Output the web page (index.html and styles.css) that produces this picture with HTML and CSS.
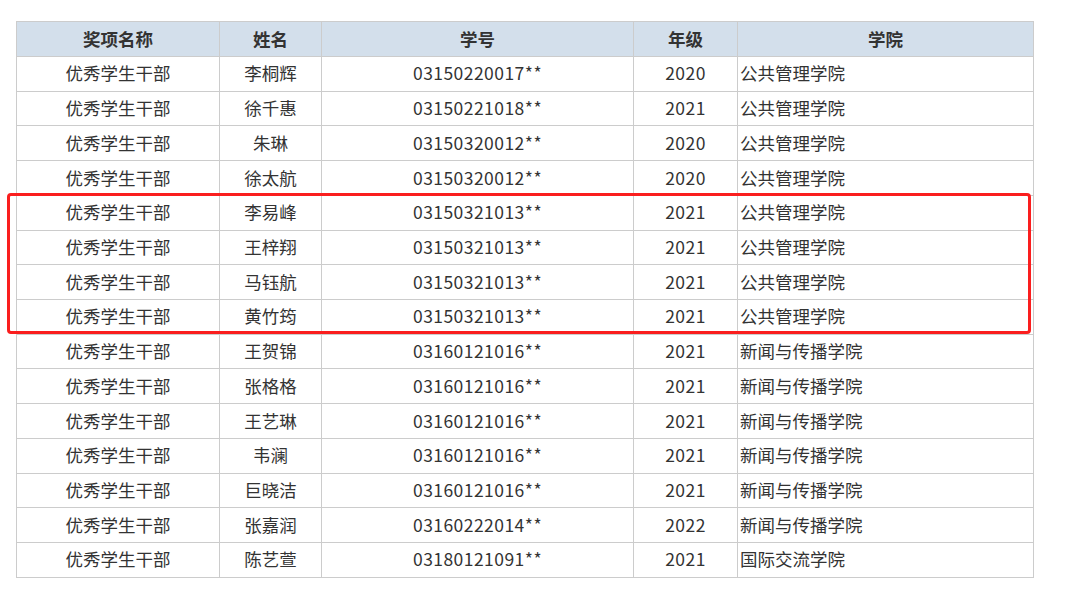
FILE: index.html
```html
<!DOCTYPE html>
<html lang="zh-CN">
<head>
<meta charset="utf-8">
<title>获奖名单</title>
<link rel="stylesheet" href="styles.css">
</head>
<body>
<div class="page">
  <div class="table-wrap">
    <table class="award-table">
      <colgroup>
        <col class="c1"><col class="c2"><col class="c3"><col class="c4"><col class="c5">
      </colgroup>
      <thead>
        <tr><th>奖项名称</th><th>姓名</th><th>学号</th><th>年级</th><th>学院</th></tr>
      </thead>
      <tbody>
        <tr><td>优秀学生干部</td><td>李桐辉</td><td class="num">03150220017**</td><td class="num">2020</td><td class="left">公共管理学院</td></tr>
        <tr><td>优秀学生干部</td><td>徐千惠</td><td class="num">03150221018**</td><td class="num">2021</td><td class="left">公共管理学院</td></tr>
        <tr><td>优秀学生干部</td><td>朱琳</td><td class="num">03150320012**</td><td class="num">2020</td><td class="left">公共管理学院</td></tr>
        <tr><td>优秀学生干部</td><td>徐太航</td><td class="num">03150320012**</td><td class="num">2020</td><td class="left">公共管理学院</td></tr>
        <tr><td>优秀学生干部</td><td>李易峰</td><td class="num">03150321013**</td><td class="num">2021</td><td class="left">公共管理学院</td></tr>
        <tr><td>优秀学生干部</td><td>王梓翔</td><td class="num">03150321013**</td><td class="num">2021</td><td class="left">公共管理学院</td></tr>
        <tr><td>优秀学生干部</td><td>马钰航</td><td class="num">03150321013**</td><td class="num">2021</td><td class="left">公共管理学院</td></tr>
        <tr><td>优秀学生干部</td><td>黄竹筠</td><td class="num">03150321013**</td><td class="num">2021</td><td class="left">公共管理学院</td></tr>
        <tr><td>优秀学生干部</td><td>王贺锦</td><td class="num">03160121016**</td><td class="num">2021</td><td class="left">新闻与传播学院</td></tr>
        <tr><td>优秀学生干部</td><td>张格格</td><td class="num">03160121016**</td><td class="num">2021</td><td class="left">新闻与传播学院</td></tr>
        <tr><td>优秀学生干部</td><td>王艺琳</td><td class="num">03160121016**</td><td class="num">2021</td><td class="left">新闻与传播学院</td></tr>
        <tr><td>优秀学生干部</td><td>韦澜</td><td class="num">03160121016**</td><td class="num">2021</td><td class="left">新闻与传播学院</td></tr>
        <tr><td>优秀学生干部</td><td>巨晓洁</td><td class="num">03160121016**</td><td class="num">2021</td><td class="left">新闻与传播学院</td></tr>
        <tr><td>优秀学生干部</td><td>张嘉润</td><td class="num">03160222014**</td><td class="num">2022</td><td class="left">新闻与传播学院</td></tr>
        <tr><td>优秀学生干部</td><td>陈艺萱</td><td class="num">03180121091**</td><td class="num">2021</td><td class="left">国际交流学院</td></tr>
      </tbody>
    </table>
    <div class="highlight"></div>
  </div>
</div>
</body>
</html>
```

FILE: styles.css
```css
html, body {
  margin: 0;
  padding: 0;
  background: #ffffff;
}

.page {
  padding: 21px 0 0 16px;
  font-family: "Noto Sans CJK SC", "Noto Sans", sans-serif;
  color: #333333;
}

.table-wrap {
  position: relative;
  width: 1017px;
}

.award-table {
  border-collapse: collapse;
  table-layout: fixed;
  width: 1017px;
  font-size: 17.5px;
}

.c1 { width: 203px; }
.c2 { width: 102px; }
.c3 { width: 312px; }
.c4 { width: 104px; }
.c5 { width: 296px; }

.award-table th,
.award-table td {
  border: 1px solid #cccccc;
  padding: 0 2px;
  text-align: center;
  vertical-align: middle;
  line-height: 20px;
  white-space: nowrap;
}

.award-table th {
  background: #d3dfeb;
  font-weight: bold;
  height: 34px;
}

.award-table td {
  height: 32.73px;
  font-weight: normal;
  padding-bottom: 1px;
}

.award-table td.num {
  letter-spacing: 0.45px;
}

.award-table td.left {
  text-align: left;
}

.highlight {
  position: absolute;
  left: -9px;
  top: 172px;
  width: 1018px;
  height: 135px;
  border: 3px solid #fa1e1e;
  border-radius: 4px;
  pointer-events: none;
}
```
